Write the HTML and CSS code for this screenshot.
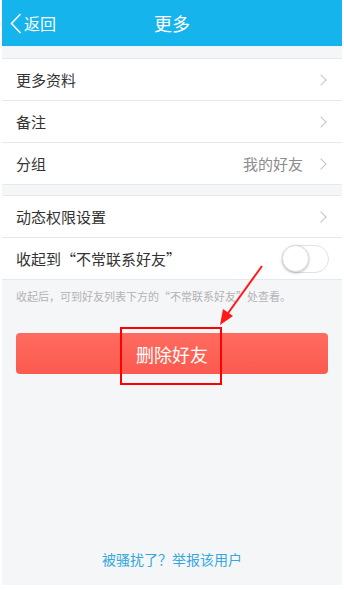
FILE: index.html
```html
<!DOCTYPE html>
<html lang="zh">
<head>
<meta charset="utf-8">
<link rel="stylesheet" href="styles.css">
</head>
<body>
<div class="screen">
  <header class="nav">
    <div class="back">
      <svg class="back-icon" width="12" height="21" viewBox="0 0 12 21"><path d="M10.5 1 L1.5 10.5 L10.5 20" fill="none" stroke="#fff" stroke-width="1.6"/></svg>
      <span>返回</span>
    </div>
    <div class="title">更多</div>
  </header>

  <section class="group first">
    <div class="row"><span class="label">更多资料</span><span class="chev"></span></div>
    <div class="row"><span class="label">备注</span><span class="chev"></span></div>
    <div class="row"><span class="label">分组</span><span class="value">我的好友</span><span class="chev"></span></div>
  </section>

  <section class="group">
    <div class="row"><span class="label">动态权限设置</span><span class="chev"></span></div>
    <div class="row"><span class="label">收起到“不常联系好友”</span><span class="toggle"><span class="knob"></span></span></div>
  </section>

  <p class="hint">收起后，可到好友列表下方的“不常联系好友”处查看。</p>

  <div class="btn-wrap">
    <button class="delete">删除好友</button>
  </div>

  <div class="spacer"></div>
  <div class="report">被骚扰了？举报该用户</div>

  <div class="mark-box"></div>
  <svg class="mark-arrow" width="50" height="65" viewBox="0 0 50 65">
    <line x1="45" y1="2" x2="9" y2="52" stroke="#ff1a1a" stroke-width="2"/>
    <polygon points="3,61 6,45 16,52" fill="#ff1a1a"/>
  </svg>
</div>
</body>
</html>
```

FILE: styles.css
```css
* { box-sizing: border-box; }
html, body { margin: 0; padding: 0; background: #fff; }
body {
  font-family: "Noto Sans CJK SC", "Noto Sans", sans-serif;
}
.screen {
  position: relative;
  width: 340px;
  height: 585px;
  margin: 0 2px;
  background: #f5f6f8;
  display: flex;
  flex-direction: column;
}
.nav {
  position: relative;
  height: 47px;
  background: #15b4ed;
  border-bottom: 1px solid #e9f4fb;
  display: flex;
  align-items: center;
  color: #fff;
  flex: none;
}
.back {
  display: flex;
  align-items: center;
  padding-left: 8px;
  gap: 2px;
  font-size: 16px;
}
.back-icon { margin-top: 1px; }
.title {
  position: absolute;
  left: 0; right: 0; top: 0; bottom: 0;
  display: flex;
  align-items: center;
  justify-content: center;
  font-size: 18px;
  pointer-events: none;
}
.group {
  background: #fff;
  border-top: 1px solid #e8e8e8;
  border-bottom: 1px solid #e8e8e8;
  margin-top: 10px;
  flex: none;
}
.group.first { margin-top: 11px; }
.row {
  height: 42px;
  display: flex;
  align-items: center;
  padding: 0 14px 0 14px;
  border-bottom: 1px solid #e8e8e8;
  font-size: 15px;
  color: #333;
}
.row:last-child { border-bottom: none; height: 41px; }
.label { flex: 1; }
.value { color: #8c8c8c; margin-right: 14px; }
.chev {
  width: 8px; height: 8px;
  border-top: 1.4px solid #c4c4c8;
  border-right: 1.4px solid #c4c4c8;
  transform: rotate(45deg);
  margin-right: 3px;
}
.toggle {
  width: 47px; height: 28px;
  border-radius: 14px;
  border: 1.5px solid #e2e2e2;
  background: #fff;
  position: relative;
  margin-right: -1px;
}
.knob {
  position: absolute;
  left: -1px; top: -1px;
  width: 27px; height: 27px;
  border-radius: 50%;
  background: #fff;
  box-shadow: 0 1px 3px rgba(0,0,0,0.25);
  border: 1px solid #ddd;
}
.hint {
  margin: 0;
  padding: 8px 14px 0;
  font-size: 11px;
  color: #b3b3b3;
  line-height: 16px;
}
.btn-wrap {
  padding: 29px 14px 0;
}
.delete {
  display: block;
  width: 312px;
  height: 41px;
  border: none;
  border-radius: 4px;
  background: linear-gradient(#ff6b5f, #fb5a4f);
  color: #fff;
  font-family: inherit;
  font-size: 18px;
  padding: 0;
}
.spacer { flex: 1; }
.report {
  text-align: center;
  font-size: 14px;
  color: #34a7dd;
  padding-bottom: 16px;
}
.mark-box {
  position: absolute;
  left: 118px;
  top: 327px;
  width: 102px;
  height: 58px;
  border: 2px solid #f00;
}
.mark-arrow {
  position: absolute;
  left: 215px;
  top: 264px;
}
```
